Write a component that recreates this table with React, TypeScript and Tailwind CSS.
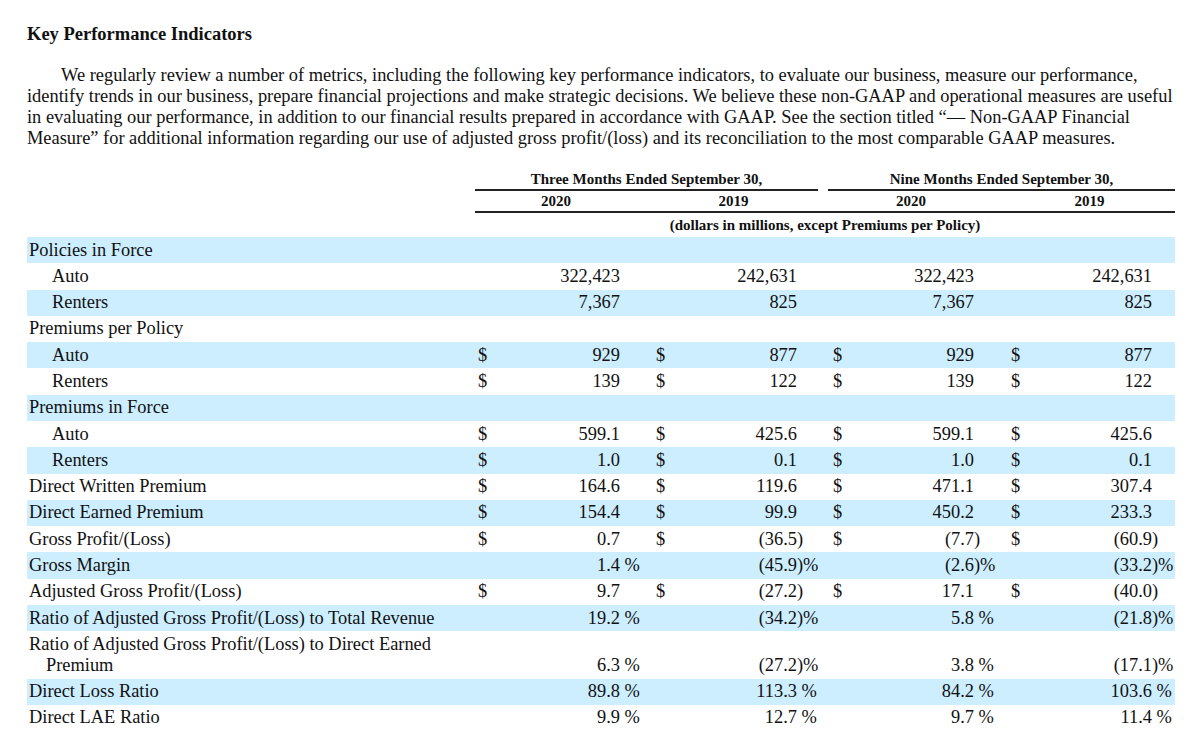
type Val = { d?: boolean; v: string; s?: string };
type Row = { label: string; indent?: boolean; shade: boolean; vals?: Val[]; wrap?: string };

const pct = (v: string): Val =>
  v.startsWith("(") ? { v: v.slice(0, -2), s: ")%" } : { v: v.replace(" %", ""), s: "\u00a0%" };
const usd = (v: string): Val => (v.startsWith("(") ? { d: true, v: v.slice(0, -1), s: ")" } : { d: true, v });
const num = (v: string): Val => ({ v });

const rows: Row[] = [
  { label: "Policies in Force", shade: true },
  { label: "Auto", indent: true, shade: false, vals: ["322,423", "242,631", "322,423", "242,631"].map(num) },
  { label: "Renters", indent: true, shade: true, vals: ["7,367", "825", "7,367", "825"].map(num) },
  { label: "Premiums per Policy", shade: false },
  { label: "Auto", indent: true, shade: true, vals: ["929", "877", "929", "877"].map(usd) },
  { label: "Renters", indent: true, shade: false, vals: ["139", "122", "139", "122"].map(usd) },
  { label: "Premiums in Force", shade: true },
  { label: "Auto", indent: true, shade: false, vals: ["599.1", "425.6", "599.1", "425.6"].map(usd) },
  { label: "Renters", indent: true, shade: true, vals: ["1.0", "0.1", "1.0", "0.1"].map(usd) },
  { label: "Direct Written Premium", shade: false, vals: ["164.6", "119.6", "471.1", "307.4"].map(usd) },
  { label: "Direct Earned Premium", shade: true, vals: ["154.4", "99.9", "450.2", "233.3"].map(usd) },
  { label: "Gross Profit/(Loss)", shade: false, vals: ["0.7", "(36.5)", "(7.7)", "(60.9)"].map(usd) },
  { label: "Gross Margin", shade: true, vals: ["1.4 %", "(45.9)%", "(2.6)%", "(33.2)%"].map(pct) },
  { label: "Adjusted Gross Profit/(Loss)", shade: false, vals: ["9.7", "(27.2)", "17.1", "(40.0)"].map(usd) },
  {
    label: "Ratio of Adjusted Gross Profit/(Loss) to Total Revenue",
    shade: true,
    vals: ["19.2 %", "(34.2)%", "5.8 %", "(21.8)%"].map(pct),
  },
  {
    label: "Ratio of Adjusted Gross Profit/(Loss) to Direct Earned",
    wrap: "Premium",
    shade: false,
    vals: ["6.3 %", "(27.2)%", "3.8 %", "(17.1)%"].map(pct),
  },
  { label: "Direct Loss Ratio", shade: true, vals: ["89.8 %", "113.3 %", "84.2 %", "103.6 %"].map(pct) },
  { label: "Direct LAE Ratio", shade: false, vals: ["9.9 %", "12.7 %", "9.7 %", "11.4 %"].map(pct) },
];

const grid =
  "grid grid-cols-[448px_30px_115px_33px_30px_114px_33px_30px_114px_34px_30px_114px_23px] items-end";

export default function App() {
  return (
    <div
      className="min-h-screen bg-white text-[#111] px-[27px] pt-[24px]"
      style={{ fontFamily: '"Liberation Serif", "Times New Roman", serif' }}
    >
      <div className="w-[1148px]">
        {/* Title */}
        <h1 className="text-[18.5px] leading-[21px] font-bold">Key Performance Indicators</h1>

        {/* Intro paragraph */}
        <p className="mt-[20px] text-[18.4px] leading-[21px]">
          <span className="block whitespace-nowrap pl-[34px]">
            We regularly review a number of metrics, including the following key performance indicators, to evaluate our business, measure our performance,
          </span>
          <span className="block whitespace-nowrap">
            identify trends in our business, prepare financial projections and make strategic decisions. We believe these non-GAAP and operational measures are useful
          </span>
          <span className="block whitespace-nowrap">
            in evaluating our performance, in addition to our financial results prepared in accordance with GAAP. See the section titled “— Non-GAAP Financial
          </span>
          <span className="block whitespace-nowrap">
            Measure” for additional information regarding our use of adjusted gross profit/(loss) and its reconciliation to the most comparable GAAP measures.
          </span>
        </p>

        {/* Column headers */}
        <div className="ml-[448px] w-[700px] mt-[22px] text-[15px] leading-[17px] font-bold">
          <div className="flex">
            <div className="w-[343px] border-b-2 border-[#222] text-center pb-[1px]">Three Months Ended September 30,</div>
            <div className="ml-[10px] w-[347px] border-b-2 border-[#222] text-center pb-[1px]">Nine Months Ended September 30,</div>
          </div>
          <div className="grid grid-cols-[178px_177px_178px_167px] border-b-2 border-[#222] pt-[2px] pb-[1px]">
            <div className="text-center pr-4">2020</div>
            <div className="text-center pr-4">2019</div>
            <div className="text-center pr-4">2020</div>
            <div className="text-center pr-1">2019</div>
          </div>
          <div className="text-center mt-[4px]">(dollars in millions, except Premiums per Policy)</div>
        </div>

        {/* Table body */}
        <div className="mt-[3px] text-[18.4px] leading-[21px]">
          {rows.map((r, i) => (
            <div key={i} className={`${grid} py-[2.65px] ${r.shade ? "bg-[#cceeff]" : ""}`}>
              <div className={`${r.indent ? "pl-[25px]" : "pl-[2px]"} whitespace-nowrap`}>
                {r.label}
                {r.wrap && <div className="pl-[17px]">{r.wrap}</div>}
              </div>
              {r.vals
                ? r.vals.map((v, j) => [
                    <div key={`d${j}`} className="pl-[3px]">{v.d ? "$" : ""}</div>,
                    <div key={`v${j}`} className="text-right">{v.v}</div>,
                    <div key={`s${j}`} className="whitespace-nowrap">{v.s ?? ""}</div>,
                  ])
                : null}
            </div>
          ))}
        </div>
      </div>
    </div>
  );
}
